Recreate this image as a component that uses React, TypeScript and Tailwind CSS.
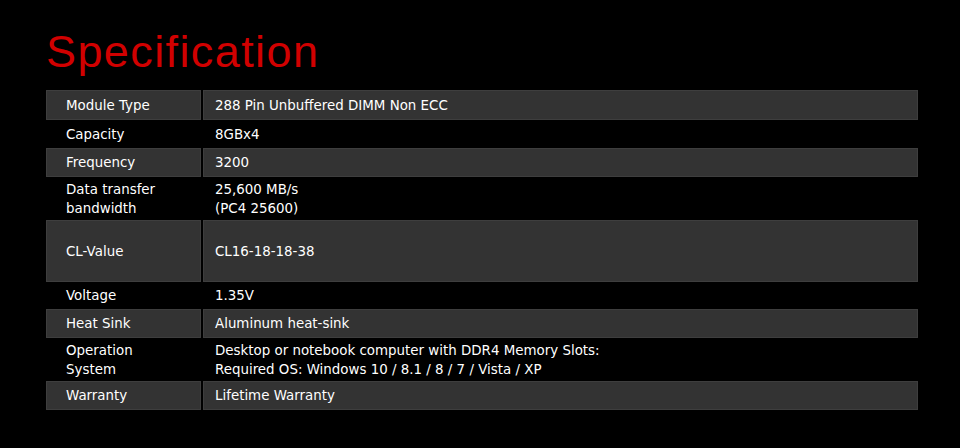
const rows: { label: string[]; value: string[]; h: string; gray: boolean }[] = [
  { label: ["Module Type"], value: ["288 Pin Unbuffered DIMM Non ECC"], h: "h-[30px]", gray: true },
  { label: ["Capacity"], value: ["8GBx4"], h: "h-[28px]", gray: false },
  { label: ["Frequency"], value: ["3200"], h: "h-[29px]", gray: true },
  { label: ["Data transfer", "bandwidth"], value: ["25,600 MB/s", "(PC4 25600)"], h: "h-[43px]", gray: false },
  { label: ["CL-Value"], value: ["CL16-18-18-38"], h: "h-[62px]", gray: true },
  { label: ["Voltage"], value: ["1.35V"], h: "h-[27px]", gray: false },
  { label: ["Heat Sink"], value: ["Aluminum heat-sink"], h: "h-[29px]", gray: true },
  {
    label: ["Operation", "System"],
    value: ["Desktop or notebook computer with DDR4 Memory Slots:", "Required OS: Windows 10 / 8.1 / 8 / 7 / Vista / XP"],
    h: "h-[43px]",
    gray: false,
  },
  { label: ["Warranty"], value: ["Lifetime Warranty"], h: "h-[29px]", gray: true },
];

export default function App() {
  return (
    <div className="w-[960px] h-[448px] bg-black overflow-hidden">
      <h1 className="pl-[46px] pt-[24px] h-[90px] text-[#d10000] text-[45px] leading-[56px] font-['Liberation_Sans',sans-serif] tracking-[1.4px]">
        Specification
      </h1>
      <div className="ml-[46px] w-[872px] flex flex-col font-['DejaVu_Sans',sans-serif] text-[13.4px] leading-[19px] text-white">
        {rows.map((r) => (
          <div key={r.label[0]} className={`flex gap-[2px] ${r.h}`}>
            <div
              className={`w-[155px] flex flex-col justify-center pl-[19px] ${
                r.gray ? "bg-[#333333] border border-[#3e3e3e]" : "pl-[20px]"
              }`}
            >
              {r.label.map((t) => (
                <span key={t}>{t}</span>
              ))}
            </div>
            <div
              className={`flex-1 flex flex-col justify-center ${
                r.gray ? "bg-[#333333] border border-[#3e3e3e] pl-[11px]" : "pl-[12px]"
              }`}
            >
              {r.value.map((t) => (
                <span key={t}>{t}</span>
              ))}
            </div>
          </div>
        ))}
      </div>
    </div>
  );
}
